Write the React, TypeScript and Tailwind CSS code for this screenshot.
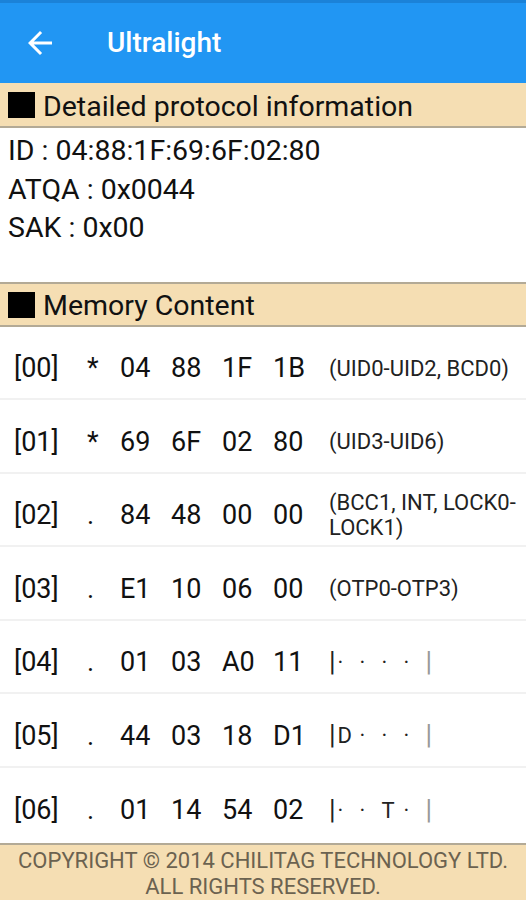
import React from 'react';

type Row = { idx: string; flag: string; bytes: string[]; note?: string; ascii?: string[] };

const rows: Row[] = [
  { idx: '[00]', flag: '*', bytes: ['04', '88', '1F', '1B'], note: '(UID0-UID2, BCD0)' },
  { idx: '[01]', flag: '*', bytes: ['69', '6F', '02', '80'], note: '(UID3-UID6)' },
  { idx: '[02]', flag: '.', bytes: ['84', '48', '00', '00'], note: '(BCC1, INT, LOCK0-LOCK1)' },
  { idx: '[03]', flag: '.', bytes: ['E1', '10', '06', '00'], note: '(OTP0-OTP3)' },
  { idx: '[04]', flag: '.', bytes: ['01', '03', 'A0', '11'], ascii: ['·', '·', '·', '·'] },
  { idx: '[05]', flag: '.', bytes: ['44', '03', '18', 'D1'], ascii: ['D', '·', '·', '·'] },
  { idx: '[06]', flag: '.', bytes: ['01', '14', '54', '02'], ascii: ['·', '·', 'T', '·'] },
];

const SectionHeader = ({ title, top }: { title: string; top?: boolean }) => (
  <div
    className={`flex items-center h-[45px] bg-[#f5deb3] border-b-2 border-[#b3aa96] ${top ? 'border-t-2' : ''}`}
  >
    <span className="ml-2 mr-2 inline-block w-[27px] h-[26px] bg-black mt-[1px]" />
    <span className="text-[28.5px] leading-none text-[#111] mt-[5px]">{title}</span>
  </div>
);

export default function App() {
  return (
    <div className="w-[526px] h-[900px] flex flex-col bg-white overflow-hidden font-['Roboto',sans-serif]">
      {/* App bar */}
      <div className="h-[3px] bg-[#1b82d8]" />
      <div className="h-[80px] bg-[#2196f3] flex items-center">
        <svg className="ml-[22px] mt-[-1px]" width="36" height="36" viewBox="0 0 24 24" fill="white">
          <path d="M20 11H7.83l5.59-5.59L12 4l-8 8 8 8 1.41-1.41L7.83 13H20v-2z" />
        </svg>
        <span className="ml-[49px] text-[28px] font-medium text-white leading-none">Ultralight</span>
      </div>

      <SectionHeader title="Detailed protocol information" />

      <div className="pt-[4px] pb-[34px] pl-2 text-[28.5px] leading-[38.5px] text-[#111]">
        <div>ID : 04:88:1F:69:6F:02:80</div>
        <div>ATQA : 0x0044</div>
        <div>SAK : 0x00</div>
      </div>

      <SectionHeader title="Memory Content" top />

      <div className="flex-1 overflow-hidden">
        {rows.map((r) => (
          <div
            key={r.idx}
            className="flex items-center h-[73.5px] pt-[12px] border-b-2 border-[#f1f1f1] text-[27px] text-[#111] last:border-b-0"
          >
            <span className="w-[87px] shrink-0 pl-[14px]">{r.idx}</span>
            <span className="w-[33px] shrink-0">{r.flag}</span>
            {r.bytes.map((b, i) => (
              <span key={i} className="w-[51px] shrink-0">{b}</span>
            ))}
            {r.note ? (
              <span className="w-[202px] shrink-0 pl-[5px] text-[22px] leading-[25px] text-[#222]">{r.note}</span>
            ) : (
              <span className="pl-[5px] flex items-center text-[22px] leading-[25px] text-[#222]">
                <span className="mr-[2px] text-[27px]">|</span>
                {r.ascii!.map((c, i) => (
                  <span key={i} className="w-[22px]">{c}</span>
                ))}
                <span className="text-[27px] text-[#999]">|</span>
              </span>
            )}
          </div>
        ))}
      </div>

      {/* Footer */}
      <div className="h-[57px] pt-[3px] bg-[#f5deb3] border-t-2 border-[#b3aa96] flex flex-col items-center justify-center text-[22px] leading-[26px] text-[#6b6250]">
        <div>COPYRIGHT © 2014 CHILITAG TECHNOLOGY LTD.</div>
        <div>ALL RIGHTS RESERVED.</div>
      </div>
    </div>
  );
}
